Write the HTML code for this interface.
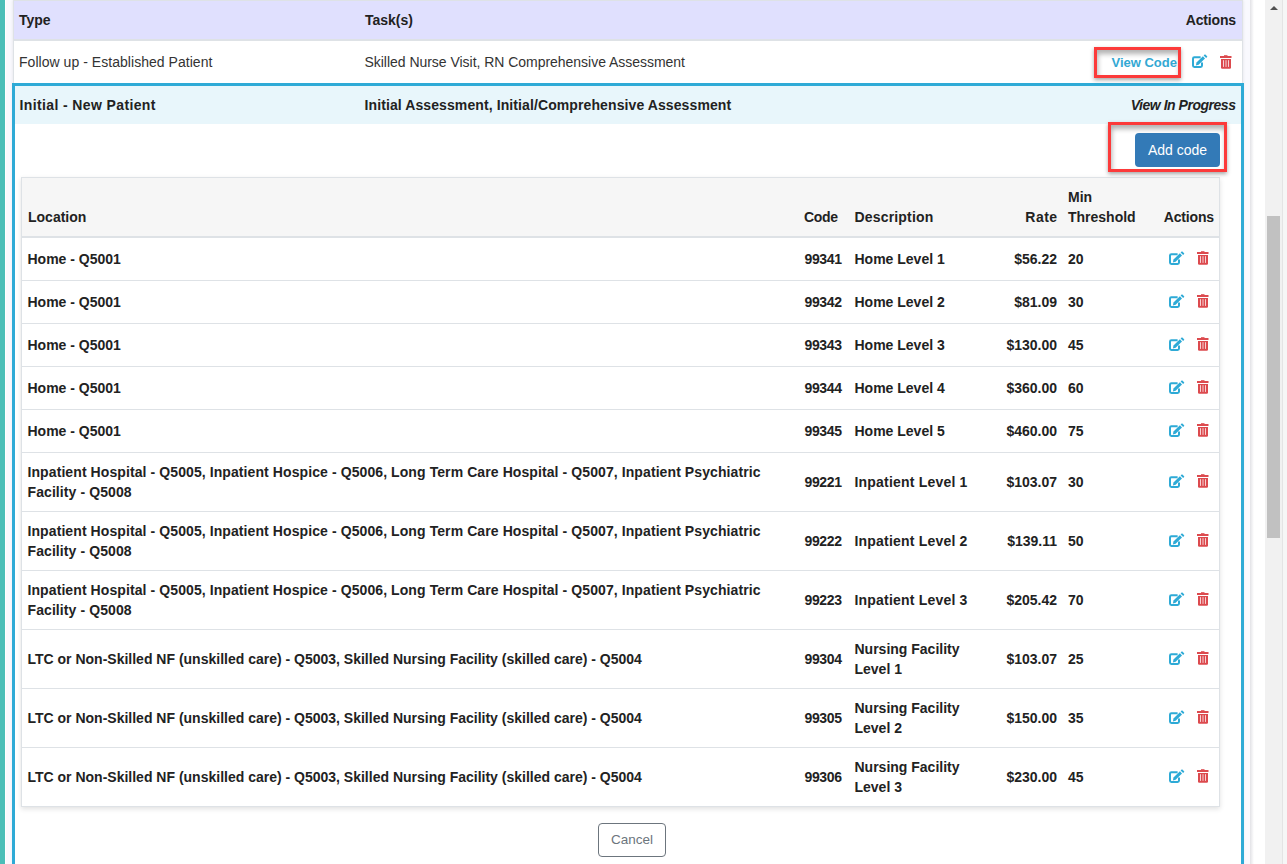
<!DOCTYPE html>
<html><head><meta charset="utf-8"><style>
html,body{margin:0;padding:0;}
body{width:1287px;height:864px;overflow:hidden;position:relative;background:#fff;font-family:"Liberation Sans",sans-serif;}
body>div{position:absolute;}
.t{white-space:nowrap;line-height:20px;}
</style></head><body>
<div style="left:0px;top:0px;width:5px;height:864px;background:#4bbeb8"></div>
<div style="left:5px;top:0px;width:1px;height:864px;background:#ffffff"></div>
<div style="left:6px;top:0px;width:1244px;height:864px;background:#f9f9fe"></div>
<div style="left:1250px;top:0px;width:4px;height:864px;background:linear-gradient(to right,#e2e2e6,#ffffff)"></div>
<div style="left:1254px;top:0px;width:11px;height:864px;background:#ffffff"></div>
<div style="left:1265px;top:0px;width:17px;height:864px;background:#f1f1f1"></div>
<div style="left:1282px;top:0px;width:1px;height:864px;background:#e4e4e4"></div>
<div style="left:1283px;top:0px;width:4px;height:864px;background:#f6f6f6"></div>
<div style="left:1267px;top:216px;width:13px;height:322px;background:#c1c1c1"></div>
<div style="left:1270px;top:6px;width:0;height:0;border-left:4px solid transparent;border-right:4px solid transparent;border-bottom:4px solid #505050"></div>
<div style="left:13px;top:0px;width:1230px;height:864px;background:#fff;box-sizing:border-box;border-left:1px solid #dee2e6;border-right:1px solid #dee2e6;border-top:1px solid #dee2e6;box-shadow:0 0 3px rgba(0,0,0,0.10)"></div>
<div style="left:14px;top:1px;width:1228px;height:38px;background:#e0e0fe"></div>
<div style="left:14px;top:39px;width:1228px;height:2px;background:#dee2e6"></div>
<div class="t" style="top:10px;font-weight:700;color:#222;font-size:14px;left:19px;">Type</div>
<div class="t" style="top:10px;font-weight:700;color:#222;font-size:14px;left:365px;">Task(s)</div>
<div class="t" style="top:10px;font-weight:700;color:#222;font-size:14px;letter-spacing:-0.15px;right:51px;text-align:right;">Actions</div>
<div class="t" style="top:52px;font-weight:400;color:#333;font-size:14px;letter-spacing:0.04px;left:19px;">Follow up - Established Patient</div>
<div class="t" style="top:52px;font-weight:400;color:#333;font-size:14px;letter-spacing:-0.03px;left:364.5px;">Skilled Nurse Visit, RN Comprehensive Assessment</div>
<div class="t" style="top:53px;font-weight:700;color:#33a8d3;font-size:13px;right:110px;text-align:right;">View Code</div>
<div style="left:1192px;top:55px;width:16px;height:14px;color:#2eaad6;line-height:0"><svg width="16" height="15" viewBox="0 -1 16 15" style="margin-top:-1px"><path d="M8.6 2.3H2.4Q1 2.3 1 3.7V10.6Q1 12 2.4 12H8.6Q10 12 10 10.6V7.4" fill="none" stroke="currentColor" stroke-width="2"/><path d="M3.9 10.4L4.5 7.6L10.9 1.3L13 3.4L6.6 9.8Z" fill="currentColor"/><path d="M11.6 0.6L12.6 -0.4Q13 -0.8 13.4 -0.4L15.1 1.3Q15.5 1.7 15.1 2.1L14.1 3.1Z" fill="currentColor"/></svg></div>
<div style="left:1220px;top:55px;width:12px;height:14px;color:#dc4a4e;line-height:0"><svg width="12" height="14" viewBox="0 0 12 14"><path d="M4 0.2H7.5V1.2H4Z" fill="currentColor"/><path d="M0 1H11.5V3H0Z" fill="currentColor"/><path d="M1 4H11V12.5Q11 13.7 9.8 13.7H2.2Q1 13.7 1 12.5Z" fill="currentColor"/><path d="M3.5 5.2V11.9M6 5.2V11.9M8.5 5.2V11.9" stroke="#fff" stroke-width="0.9" opacity="0.85"/></svg></div>
<div style="left:12px;top:83px;width:1232px;height:900px;box-sizing:border-box;border:3px solid #2eaad6;background:#fff"></div>
<div style="left:15px;top:86px;width:1226px;height:38px;background:#e8f6fb"></div>
<div class="t" style="top:95px;font-weight:700;color:#222;font-size:14px;letter-spacing:0.38px;left:19.5px;">Initial - New Patient</div>
<div class="t" style="top:95px;font-weight:700;color:#222;font-size:14px;letter-spacing:0.1px;left:364.5px;">Initial Assessment, Initial/Comprehensive Assessment</div>
<div class="t" style="top:95px;font-weight:700;color:#222;font-size:14px;letter-spacing:-0.47px;right:51.5px;text-align:right;font-style:italic">View In Progress</div>
<div style="left:1135px;top:133px;width:85px;height:34px;background:#337ab7;border-radius:4px"></div>
<div class="t" style="top:140px;font-weight:400;color:#fff;font-size:14px;left:1148px;">Add code</div>
<div style="left:21px;top:177px;width:1199px;height:630px;box-sizing:border-box;border:1px solid #dee2e6;background:#fff;box-shadow:0 2px 5px rgba(0,0,0,0.12)"></div>
<div style="left:22px;top:178px;width:1197px;height:58px;background:#f6f6f6"></div>
<div style="left:22px;top:236px;width:1197px;height:2px;background:#dee2e6"></div>
<div class="t" style="top:207px;font-weight:700;color:#222;font-size:14px;left:28px;">Location</div>
<div class="t" style="top:207px;font-weight:700;color:#222;font-size:14px;letter-spacing:-0.35px;left:804px;">Code</div>
<div class="t" style="top:207px;font-weight:700;color:#222;font-size:14px;letter-spacing:0.17px;left:854.5px;">Description</div>
<div class="t" style="top:207px;font-weight:700;color:#222;font-size:14px;letter-spacing:0.45px;right:229.5px;text-align:right;">Rate</div>
<div class="t" style="top:187px;font-weight:700;color:#222;font-size:14px;left:1068px;">Min</div>
<div class="t" style="top:207px;font-weight:700;color:#222;font-size:14px;left:1068px;">Threshold</div>
<div class="t" style="top:207px;font-weight:700;color:#222;font-size:14px;letter-spacing:-0.15px;right:73px;text-align:right;">Actions</div>
<div style="left:22px;top:280px;width:1197px;height:1px;background:#dee2e6"></div>
<div class="t" style="top:249px;font-weight:700;color:#222;font-size:14px;left:27.5px;">Home - Q5001</div>
<div class="t" style="top:249px;font-weight:700;color:#222;font-size:14px;letter-spacing:-0.35px;left:804.5px;">99341</div>
<div class="t" style="top:249px;font-weight:700;color:#222;font-size:14px;left:854.5px;">Home Level 1</div>
<div class="t" style="top:249px;font-weight:700;color:#222;font-size:14px;right:230px;text-align:right;">$56.22</div>
<div class="t" style="top:249px;font-weight:700;color:#222;font-size:14px;left:1068px;">20</div>
<div style="left:1169px;top:252px;width:16px;height:14px;color:#2eaad6;line-height:0"><svg width="16" height="15" viewBox="0 -1 16 15" style="margin-top:-1px"><path d="M8.6 2.3H2.4Q1 2.3 1 3.7V10.6Q1 12 2.4 12H8.6Q10 12 10 10.6V7.4" fill="none" stroke="currentColor" stroke-width="2"/><path d="M3.9 10.4L4.5 7.6L10.9 1.3L13 3.4L6.6 9.8Z" fill="currentColor"/><path d="M11.6 0.6L12.6 -0.4Q13 -0.8 13.4 -0.4L15.1 1.3Q15.5 1.7 15.1 2.1L14.1 3.1Z" fill="currentColor"/></svg></div>
<div style="left:1197px;top:251px;width:12px;height:14px;color:#dc4a4e;line-height:0"><svg width="12" height="14" viewBox="0 0 12 14"><path d="M4 0.2H7.5V1.2H4Z" fill="currentColor"/><path d="M0 1H11.5V3H0Z" fill="currentColor"/><path d="M1 4H11V12.5Q11 13.7 9.8 13.7H2.2Q1 13.7 1 12.5Z" fill="currentColor"/><path d="M3.5 5.2V11.9M6 5.2V11.9M8.5 5.2V11.9" stroke="#fff" stroke-width="0.9" opacity="0.85"/></svg></div>
<div style="left:22px;top:323px;width:1197px;height:1px;background:#dee2e6"></div>
<div class="t" style="top:292px;font-weight:700;color:#222;font-size:14px;left:27.5px;">Home - Q5001</div>
<div class="t" style="top:292px;font-weight:700;color:#222;font-size:14px;letter-spacing:-0.35px;left:804.5px;">99342</div>
<div class="t" style="top:292px;font-weight:700;color:#222;font-size:14px;left:854.5px;">Home Level 2</div>
<div class="t" style="top:292px;font-weight:700;color:#222;font-size:14px;right:230px;text-align:right;">$81.09</div>
<div class="t" style="top:292px;font-weight:700;color:#222;font-size:14px;left:1068px;">30</div>
<div style="left:1169px;top:295px;width:16px;height:14px;color:#2eaad6;line-height:0"><svg width="16" height="15" viewBox="0 -1 16 15" style="margin-top:-1px"><path d="M8.6 2.3H2.4Q1 2.3 1 3.7V10.6Q1 12 2.4 12H8.6Q10 12 10 10.6V7.4" fill="none" stroke="currentColor" stroke-width="2"/><path d="M3.9 10.4L4.5 7.6L10.9 1.3L13 3.4L6.6 9.8Z" fill="currentColor"/><path d="M11.6 0.6L12.6 -0.4Q13 -0.8 13.4 -0.4L15.1 1.3Q15.5 1.7 15.1 2.1L14.1 3.1Z" fill="currentColor"/></svg></div>
<div style="left:1197px;top:294px;width:12px;height:14px;color:#dc4a4e;line-height:0"><svg width="12" height="14" viewBox="0 0 12 14"><path d="M4 0.2H7.5V1.2H4Z" fill="currentColor"/><path d="M0 1H11.5V3H0Z" fill="currentColor"/><path d="M1 4H11V12.5Q11 13.7 9.8 13.7H2.2Q1 13.7 1 12.5Z" fill="currentColor"/><path d="M3.5 5.2V11.9M6 5.2V11.9M8.5 5.2V11.9" stroke="#fff" stroke-width="0.9" opacity="0.85"/></svg></div>
<div style="left:22px;top:366px;width:1197px;height:1px;background:#dee2e6"></div>
<div class="t" style="top:335px;font-weight:700;color:#222;font-size:14px;left:27.5px;">Home - Q5001</div>
<div class="t" style="top:335px;font-weight:700;color:#222;font-size:14px;letter-spacing:-0.35px;left:804.5px;">99343</div>
<div class="t" style="top:335px;font-weight:700;color:#222;font-size:14px;left:854.5px;">Home Level 3</div>
<div class="t" style="top:335px;font-weight:700;color:#222;font-size:14px;right:230px;text-align:right;">$130.00</div>
<div class="t" style="top:335px;font-weight:700;color:#222;font-size:14px;left:1068px;">45</div>
<div style="left:1169px;top:338px;width:16px;height:14px;color:#2eaad6;line-height:0"><svg width="16" height="15" viewBox="0 -1 16 15" style="margin-top:-1px"><path d="M8.6 2.3H2.4Q1 2.3 1 3.7V10.6Q1 12 2.4 12H8.6Q10 12 10 10.6V7.4" fill="none" stroke="currentColor" stroke-width="2"/><path d="M3.9 10.4L4.5 7.6L10.9 1.3L13 3.4L6.6 9.8Z" fill="currentColor"/><path d="M11.6 0.6L12.6 -0.4Q13 -0.8 13.4 -0.4L15.1 1.3Q15.5 1.7 15.1 2.1L14.1 3.1Z" fill="currentColor"/></svg></div>
<div style="left:1197px;top:337px;width:12px;height:14px;color:#dc4a4e;line-height:0"><svg width="12" height="14" viewBox="0 0 12 14"><path d="M4 0.2H7.5V1.2H4Z" fill="currentColor"/><path d="M0 1H11.5V3H0Z" fill="currentColor"/><path d="M1 4H11V12.5Q11 13.7 9.8 13.7H2.2Q1 13.7 1 12.5Z" fill="currentColor"/><path d="M3.5 5.2V11.9M6 5.2V11.9M8.5 5.2V11.9" stroke="#fff" stroke-width="0.9" opacity="0.85"/></svg></div>
<div style="left:22px;top:409px;width:1197px;height:1px;background:#dee2e6"></div>
<div class="t" style="top:378px;font-weight:700;color:#222;font-size:14px;left:27.5px;">Home - Q5001</div>
<div class="t" style="top:378px;font-weight:700;color:#222;font-size:14px;letter-spacing:-0.35px;left:804.5px;">99344</div>
<div class="t" style="top:378px;font-weight:700;color:#222;font-size:14px;left:854.5px;">Home Level 4</div>
<div class="t" style="top:378px;font-weight:700;color:#222;font-size:14px;right:230px;text-align:right;">$360.00</div>
<div class="t" style="top:378px;font-weight:700;color:#222;font-size:14px;left:1068px;">60</div>
<div style="left:1169px;top:381px;width:16px;height:14px;color:#2eaad6;line-height:0"><svg width="16" height="15" viewBox="0 -1 16 15" style="margin-top:-1px"><path d="M8.6 2.3H2.4Q1 2.3 1 3.7V10.6Q1 12 2.4 12H8.6Q10 12 10 10.6V7.4" fill="none" stroke="currentColor" stroke-width="2"/><path d="M3.9 10.4L4.5 7.6L10.9 1.3L13 3.4L6.6 9.8Z" fill="currentColor"/><path d="M11.6 0.6L12.6 -0.4Q13 -0.8 13.4 -0.4L15.1 1.3Q15.5 1.7 15.1 2.1L14.1 3.1Z" fill="currentColor"/></svg></div>
<div style="left:1197px;top:380px;width:12px;height:14px;color:#dc4a4e;line-height:0"><svg width="12" height="14" viewBox="0 0 12 14"><path d="M4 0.2H7.5V1.2H4Z" fill="currentColor"/><path d="M0 1H11.5V3H0Z" fill="currentColor"/><path d="M1 4H11V12.5Q11 13.7 9.8 13.7H2.2Q1 13.7 1 12.5Z" fill="currentColor"/><path d="M3.5 5.2V11.9M6 5.2V11.9M8.5 5.2V11.9" stroke="#fff" stroke-width="0.9" opacity="0.85"/></svg></div>
<div style="left:22px;top:452px;width:1197px;height:1px;background:#dee2e6"></div>
<div class="t" style="top:421px;font-weight:700;color:#222;font-size:14px;left:27.5px;">Home - Q5001</div>
<div class="t" style="top:421px;font-weight:700;color:#222;font-size:14px;letter-spacing:-0.35px;left:804.5px;">99345</div>
<div class="t" style="top:421px;font-weight:700;color:#222;font-size:14px;left:854.5px;">Home Level 5</div>
<div class="t" style="top:421px;font-weight:700;color:#222;font-size:14px;right:230px;text-align:right;">$460.00</div>
<div class="t" style="top:421px;font-weight:700;color:#222;font-size:14px;left:1068px;">75</div>
<div style="left:1169px;top:424px;width:16px;height:14px;color:#2eaad6;line-height:0"><svg width="16" height="15" viewBox="0 -1 16 15" style="margin-top:-1px"><path d="M8.6 2.3H2.4Q1 2.3 1 3.7V10.6Q1 12 2.4 12H8.6Q10 12 10 10.6V7.4" fill="none" stroke="currentColor" stroke-width="2"/><path d="M3.9 10.4L4.5 7.6L10.9 1.3L13 3.4L6.6 9.8Z" fill="currentColor"/><path d="M11.6 0.6L12.6 -0.4Q13 -0.8 13.4 -0.4L15.1 1.3Q15.5 1.7 15.1 2.1L14.1 3.1Z" fill="currentColor"/></svg></div>
<div style="left:1197px;top:423px;width:12px;height:14px;color:#dc4a4e;line-height:0"><svg width="12" height="14" viewBox="0 0 12 14"><path d="M4 0.2H7.5V1.2H4Z" fill="currentColor"/><path d="M0 1H11.5V3H0Z" fill="currentColor"/><path d="M1 4H11V12.5Q11 13.7 9.8 13.7H2.2Q1 13.7 1 12.5Z" fill="currentColor"/><path d="M3.5 5.2V11.9M6 5.2V11.9M8.5 5.2V11.9" stroke="#fff" stroke-width="0.9" opacity="0.85"/></svg></div>
<div style="left:22px;top:511px;width:1197px;height:1px;background:#dee2e6"></div>
<div class="t" style="top:462px;font-weight:700;color:#222;font-size:14px;letter-spacing:0.09px;left:27.5px;">Inpatient Hospital - Q5005, Inpatient Hospice - Q5006, Long Term Care Hospital - Q5007, Inpatient Psychiatric</div>
<div class="t" style="top:482px;font-weight:700;color:#222;font-size:14px;letter-spacing:0.09px;left:27.5px;">Facility - Q5008</div>
<div class="t" style="top:472px;font-weight:700;color:#222;font-size:14px;letter-spacing:-0.35px;left:804.5px;">99221</div>
<div class="t" style="top:472px;font-weight:700;color:#222;font-size:14px;letter-spacing:0.2px;left:854.5px;">Inpatient Level 1</div>
<div class="t" style="top:472px;font-weight:700;color:#222;font-size:14px;right:230px;text-align:right;">$103.07</div>
<div class="t" style="top:472px;font-weight:700;color:#222;font-size:14px;left:1068px;">30</div>
<div style="left:1169px;top:475px;width:16px;height:14px;color:#2eaad6;line-height:0"><svg width="16" height="15" viewBox="0 -1 16 15" style="margin-top:-1px"><path d="M8.6 2.3H2.4Q1 2.3 1 3.7V10.6Q1 12 2.4 12H8.6Q10 12 10 10.6V7.4" fill="none" stroke="currentColor" stroke-width="2"/><path d="M3.9 10.4L4.5 7.6L10.9 1.3L13 3.4L6.6 9.8Z" fill="currentColor"/><path d="M11.6 0.6L12.6 -0.4Q13 -0.8 13.4 -0.4L15.1 1.3Q15.5 1.7 15.1 2.1L14.1 3.1Z" fill="currentColor"/></svg></div>
<div style="left:1197px;top:474px;width:12px;height:14px;color:#dc4a4e;line-height:0"><svg width="12" height="14" viewBox="0 0 12 14"><path d="M4 0.2H7.5V1.2H4Z" fill="currentColor"/><path d="M0 1H11.5V3H0Z" fill="currentColor"/><path d="M1 4H11V12.5Q11 13.7 9.8 13.7H2.2Q1 13.7 1 12.5Z" fill="currentColor"/><path d="M3.5 5.2V11.9M6 5.2V11.9M8.5 5.2V11.9" stroke="#fff" stroke-width="0.9" opacity="0.85"/></svg></div>
<div style="left:22px;top:570px;width:1197px;height:1px;background:#dee2e6"></div>
<div class="t" style="top:521px;font-weight:700;color:#222;font-size:14px;letter-spacing:0.09px;left:27.5px;">Inpatient Hospital - Q5005, Inpatient Hospice - Q5006, Long Term Care Hospital - Q5007, Inpatient Psychiatric</div>
<div class="t" style="top:541px;font-weight:700;color:#222;font-size:14px;letter-spacing:0.09px;left:27.5px;">Facility - Q5008</div>
<div class="t" style="top:531px;font-weight:700;color:#222;font-size:14px;letter-spacing:-0.35px;left:804.5px;">99222</div>
<div class="t" style="top:531px;font-weight:700;color:#222;font-size:14px;letter-spacing:0.2px;left:854.5px;">Inpatient Level 2</div>
<div class="t" style="top:531px;font-weight:700;color:#222;font-size:14px;right:230px;text-align:right;">$139.11</div>
<div class="t" style="top:531px;font-weight:700;color:#222;font-size:14px;left:1068px;">50</div>
<div style="left:1169px;top:534px;width:16px;height:14px;color:#2eaad6;line-height:0"><svg width="16" height="15" viewBox="0 -1 16 15" style="margin-top:-1px"><path d="M8.6 2.3H2.4Q1 2.3 1 3.7V10.6Q1 12 2.4 12H8.6Q10 12 10 10.6V7.4" fill="none" stroke="currentColor" stroke-width="2"/><path d="M3.9 10.4L4.5 7.6L10.9 1.3L13 3.4L6.6 9.8Z" fill="currentColor"/><path d="M11.6 0.6L12.6 -0.4Q13 -0.8 13.4 -0.4L15.1 1.3Q15.5 1.7 15.1 2.1L14.1 3.1Z" fill="currentColor"/></svg></div>
<div style="left:1197px;top:533px;width:12px;height:14px;color:#dc4a4e;line-height:0"><svg width="12" height="14" viewBox="0 0 12 14"><path d="M4 0.2H7.5V1.2H4Z" fill="currentColor"/><path d="M0 1H11.5V3H0Z" fill="currentColor"/><path d="M1 4H11V12.5Q11 13.7 9.8 13.7H2.2Q1 13.7 1 12.5Z" fill="currentColor"/><path d="M3.5 5.2V11.9M6 5.2V11.9M8.5 5.2V11.9" stroke="#fff" stroke-width="0.9" opacity="0.85"/></svg></div>
<div style="left:22px;top:629px;width:1197px;height:1px;background:#dee2e6"></div>
<div class="t" style="top:580px;font-weight:700;color:#222;font-size:14px;letter-spacing:0.09px;left:27.5px;">Inpatient Hospital - Q5005, Inpatient Hospice - Q5006, Long Term Care Hospital - Q5007, Inpatient Psychiatric</div>
<div class="t" style="top:600px;font-weight:700;color:#222;font-size:14px;letter-spacing:0.09px;left:27.5px;">Facility - Q5008</div>
<div class="t" style="top:590px;font-weight:700;color:#222;font-size:14px;letter-spacing:-0.35px;left:804.5px;">99223</div>
<div class="t" style="top:590px;font-weight:700;color:#222;font-size:14px;letter-spacing:0.2px;left:854.5px;">Inpatient Level 3</div>
<div class="t" style="top:590px;font-weight:700;color:#222;font-size:14px;right:230px;text-align:right;">$205.42</div>
<div class="t" style="top:590px;font-weight:700;color:#222;font-size:14px;left:1068px;">70</div>
<div style="left:1169px;top:593px;width:16px;height:14px;color:#2eaad6;line-height:0"><svg width="16" height="15" viewBox="0 -1 16 15" style="margin-top:-1px"><path d="M8.6 2.3H2.4Q1 2.3 1 3.7V10.6Q1 12 2.4 12H8.6Q10 12 10 10.6V7.4" fill="none" stroke="currentColor" stroke-width="2"/><path d="M3.9 10.4L4.5 7.6L10.9 1.3L13 3.4L6.6 9.8Z" fill="currentColor"/><path d="M11.6 0.6L12.6 -0.4Q13 -0.8 13.4 -0.4L15.1 1.3Q15.5 1.7 15.1 2.1L14.1 3.1Z" fill="currentColor"/></svg></div>
<div style="left:1197px;top:592px;width:12px;height:14px;color:#dc4a4e;line-height:0"><svg width="12" height="14" viewBox="0 0 12 14"><path d="M4 0.2H7.5V1.2H4Z" fill="currentColor"/><path d="M0 1H11.5V3H0Z" fill="currentColor"/><path d="M1 4H11V12.5Q11 13.7 9.8 13.7H2.2Q1 13.7 1 12.5Z" fill="currentColor"/><path d="M3.5 5.2V11.9M6 5.2V11.9M8.5 5.2V11.9" stroke="#fff" stroke-width="0.9" opacity="0.85"/></svg></div>
<div style="left:22px;top:688px;width:1197px;height:1px;background:#dee2e6"></div>
<div class="t" style="top:649px;font-weight:700;color:#222;font-size:14px;left:27.5px;">LTC or Non-Skilled NF (unskilled care) - Q5003, Skilled Nursing Facility (skilled care) - Q5004</div>
<div class="t" style="top:649px;font-weight:700;color:#222;font-size:14px;letter-spacing:-0.35px;left:804.5px;">99304</div>
<div class="t" style="top:639px;font-weight:700;color:#222;font-size:14px;left:854.5px;">Nursing Facility</div>
<div class="t" style="top:659px;font-weight:700;color:#222;font-size:14px;left:854.5px;">Level 1</div>
<div class="t" style="top:649px;font-weight:700;color:#222;font-size:14px;right:230px;text-align:right;">$103.07</div>
<div class="t" style="top:649px;font-weight:700;color:#222;font-size:14px;left:1068px;">25</div>
<div style="left:1169px;top:652px;width:16px;height:14px;color:#2eaad6;line-height:0"><svg width="16" height="15" viewBox="0 -1 16 15" style="margin-top:-1px"><path d="M8.6 2.3H2.4Q1 2.3 1 3.7V10.6Q1 12 2.4 12H8.6Q10 12 10 10.6V7.4" fill="none" stroke="currentColor" stroke-width="2"/><path d="M3.9 10.4L4.5 7.6L10.9 1.3L13 3.4L6.6 9.8Z" fill="currentColor"/><path d="M11.6 0.6L12.6 -0.4Q13 -0.8 13.4 -0.4L15.1 1.3Q15.5 1.7 15.1 2.1L14.1 3.1Z" fill="currentColor"/></svg></div>
<div style="left:1197px;top:651px;width:12px;height:14px;color:#dc4a4e;line-height:0"><svg width="12" height="14" viewBox="0 0 12 14"><path d="M4 0.2H7.5V1.2H4Z" fill="currentColor"/><path d="M0 1H11.5V3H0Z" fill="currentColor"/><path d="M1 4H11V12.5Q11 13.7 9.8 13.7H2.2Q1 13.7 1 12.5Z" fill="currentColor"/><path d="M3.5 5.2V11.9M6 5.2V11.9M8.5 5.2V11.9" stroke="#fff" stroke-width="0.9" opacity="0.85"/></svg></div>
<div style="left:22px;top:747px;width:1197px;height:1px;background:#dee2e6"></div>
<div class="t" style="top:708px;font-weight:700;color:#222;font-size:14px;left:27.5px;">LTC or Non-Skilled NF (unskilled care) - Q5003, Skilled Nursing Facility (skilled care) - Q5004</div>
<div class="t" style="top:708px;font-weight:700;color:#222;font-size:14px;letter-spacing:-0.35px;left:804.5px;">99305</div>
<div class="t" style="top:698px;font-weight:700;color:#222;font-size:14px;left:854.5px;">Nursing Facility</div>
<div class="t" style="top:718px;font-weight:700;color:#222;font-size:14px;left:854.5px;">Level 2</div>
<div class="t" style="top:708px;font-weight:700;color:#222;font-size:14px;right:230px;text-align:right;">$150.00</div>
<div class="t" style="top:708px;font-weight:700;color:#222;font-size:14px;left:1068px;">35</div>
<div style="left:1169px;top:711px;width:16px;height:14px;color:#2eaad6;line-height:0"><svg width="16" height="15" viewBox="0 -1 16 15" style="margin-top:-1px"><path d="M8.6 2.3H2.4Q1 2.3 1 3.7V10.6Q1 12 2.4 12H8.6Q10 12 10 10.6V7.4" fill="none" stroke="currentColor" stroke-width="2"/><path d="M3.9 10.4L4.5 7.6L10.9 1.3L13 3.4L6.6 9.8Z" fill="currentColor"/><path d="M11.6 0.6L12.6 -0.4Q13 -0.8 13.4 -0.4L15.1 1.3Q15.5 1.7 15.1 2.1L14.1 3.1Z" fill="currentColor"/></svg></div>
<div style="left:1197px;top:710px;width:12px;height:14px;color:#dc4a4e;line-height:0"><svg width="12" height="14" viewBox="0 0 12 14"><path d="M4 0.2H7.5V1.2H4Z" fill="currentColor"/><path d="M0 1H11.5V3H0Z" fill="currentColor"/><path d="M1 4H11V12.5Q11 13.7 9.8 13.7H2.2Q1 13.7 1 12.5Z" fill="currentColor"/><path d="M3.5 5.2V11.9M6 5.2V11.9M8.5 5.2V11.9" stroke="#fff" stroke-width="0.9" opacity="0.85"/></svg></div>
<div class="t" style="top:767px;font-weight:700;color:#222;font-size:14px;left:27.5px;">LTC or Non-Skilled NF (unskilled care) - Q5003, Skilled Nursing Facility (skilled care) - Q5004</div>
<div class="t" style="top:767px;font-weight:700;color:#222;font-size:14px;letter-spacing:-0.35px;left:804.5px;">99306</div>
<div class="t" style="top:757px;font-weight:700;color:#222;font-size:14px;left:854.5px;">Nursing Facility</div>
<div class="t" style="top:777px;font-weight:700;color:#222;font-size:14px;left:854.5px;">Level 3</div>
<div class="t" style="top:767px;font-weight:700;color:#222;font-size:14px;right:230px;text-align:right;">$230.00</div>
<div class="t" style="top:767px;font-weight:700;color:#222;font-size:14px;left:1068px;">45</div>
<div style="left:1169px;top:770px;width:16px;height:14px;color:#2eaad6;line-height:0"><svg width="16" height="15" viewBox="0 -1 16 15" style="margin-top:-1px"><path d="M8.6 2.3H2.4Q1 2.3 1 3.7V10.6Q1 12 2.4 12H8.6Q10 12 10 10.6V7.4" fill="none" stroke="currentColor" stroke-width="2"/><path d="M3.9 10.4L4.5 7.6L10.9 1.3L13 3.4L6.6 9.8Z" fill="currentColor"/><path d="M11.6 0.6L12.6 -0.4Q13 -0.8 13.4 -0.4L15.1 1.3Q15.5 1.7 15.1 2.1L14.1 3.1Z" fill="currentColor"/></svg></div>
<div style="left:1197px;top:769px;width:12px;height:14px;color:#dc4a4e;line-height:0"><svg width="12" height="14" viewBox="0 0 12 14"><path d="M4 0.2H7.5V1.2H4Z" fill="currentColor"/><path d="M0 1H11.5V3H0Z" fill="currentColor"/><path d="M1 4H11V12.5Q11 13.7 9.8 13.7H2.2Q1 13.7 1 12.5Z" fill="currentColor"/><path d="M3.5 5.2V11.9M6 5.2V11.9M8.5 5.2V11.9" stroke="#fff" stroke-width="0.9" opacity="0.85"/></svg></div>
<div style="left:598px;top:823px;width:68px;height:34px;box-sizing:border-box;border:1px solid #6c757d;border-radius:4px;background:#fff"></div>
<div class="t" style="top:830px;font-weight:400;color:#6c757d;font-size:13.5px;left:611px;">Cancel</div>
<div style="left:1094px;top:47px;width:87px;height:31px;box-sizing:border-box;border:3px solid #fc3a3a;box-shadow:0 2px 4px rgba(0,0,0,0.35), inset 1px 4px 5px rgba(0,0,0,0.3)"></div>
<div style="left:1108px;top:122px;width:119px;height:50px;box-sizing:border-box;border:3px solid #fc3a3a;box-shadow:0 2px 4px rgba(0,0,0,0.35), inset 1px 4px 5px rgba(0,0,0,0.3)"></div>
</body></html>
